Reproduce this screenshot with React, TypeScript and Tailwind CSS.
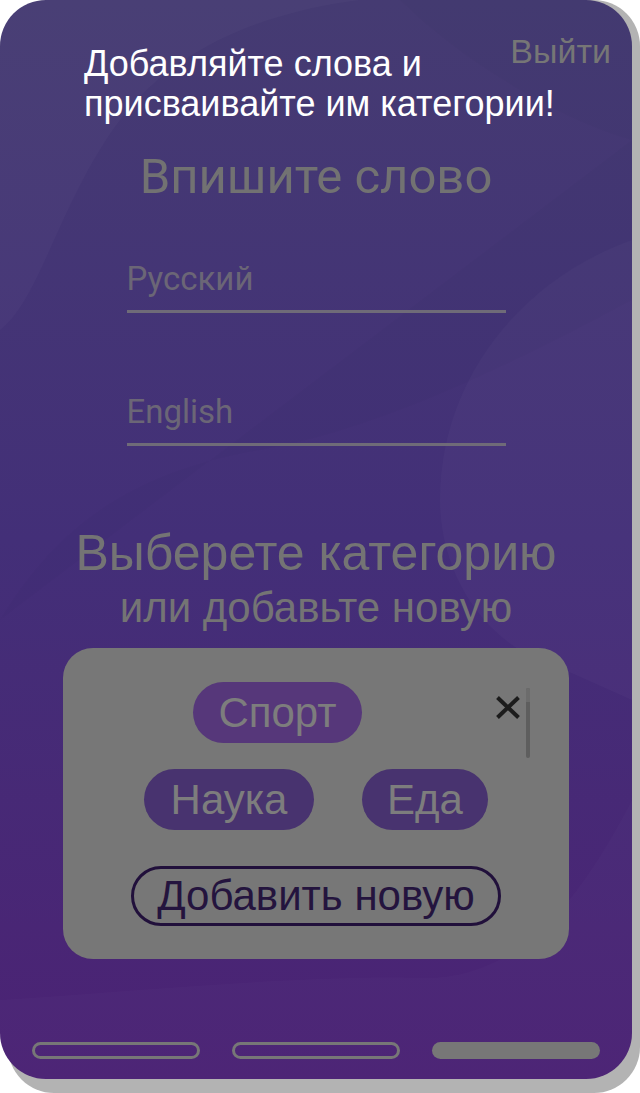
const arial = { fontFamily: '"Liberation Sans", Arial, sans-serif' };
const roboto = { fontFamily: 'Roboto, "Liberation Sans", sans-serif' };

function Chip({ label, className }: { label: string; className: string }) {
  return (
    <div
      className={`flex h-[61px] items-center justify-center rounded-full text-[42px] leading-none text-[#7d7d7d] ${className}`}
      style={arial}
    >
      {label}
    </div>
  );
}

function Field({ placeholder }: { placeholder: string }) {
  return (
    <div className="w-[379px] border-b-[3px] border-[#6f6b78] pb-[11px]">
      <div className="text-[33px] leading-[40px] text-[#6b6676]" style={roboto}>
        {placeholder}
      </div>
    </div>
  );
}

function Backdrop() {
  return (
    <svg className="pointer-events-none absolute inset-0" width="632" height="1079" viewBox="0 0 632 1079">
      <path d="M0 330 C 40 300, 60 200, 120 120 C 180 40, 280 10, 360 0 L 0 0 Z" fill="#ffffff" opacity="0.025" />
      <path d="M632 240 C 520 280, 440 380, 440 500 C 440 560, 470 620, 520 650 L 632 700 Z" fill="#ffffff" opacity="0.025" />
      <path d="M0 620 C 60 520, 140 470, 260 450 C 380 430, 520 360, 632 300 L 632 0 L 400 0 C 460 60, 560 120, 632 140" fill="#000000" opacity="0.015" />
      <path d="M0 1000 C 150 990, 300 975, 420 978 C 520 980, 580 900, 632 800 L 632 1079 L 0 1079 Z" fill="#ffffff" opacity="0.015" />
    </svg>
  );
}

export default function App() {
  return (
    <div className="relative h-[1093px] w-[640px] overflow-hidden bg-white">
      <div className="absolute left-2 top-0 h-[1093px] w-[632px] rounded-[46px] bg-[#b3b3b3]" />
      <div className="relative flex h-[1079px] w-[632px] flex-col overflow-hidden rounded-[46px] bg-gradient-to-b from-[#453b72] via-[#432f78] to-[#4b2274]">
        <Backdrop />

        <div className="relative flex justify-end pr-[21px] pt-[34px]">
          <span className="text-[34px] leading-none text-[#767676]" style={arial}>
            Выйти
          </span>
        </div>

        <h1 className="relative mt-[84px] text-center text-[49px] leading-none text-[#727272]" style={roboto}>
          Впишите слово
        </h1>

        <div className="relative mt-[58px] flex flex-col items-center gap-[79px]">
          <Field placeholder="Русский" />
          <Field placeholder="English" />
        </div>

        <div className="relative mt-[82px] flex flex-col items-center" style={arial}>
          <h2 className="text-[50px] leading-none text-[#747474]">Выберете категорию</h2>
          <h3 className="mt-[9px] text-[42px] leading-none text-[#747474]">или добавьте новую</h3>
        </div>

        <div className="relative ml-[63px] mt-[19px] flex h-[311px] w-[506px] flex-col rounded-[30px] bg-[#777777] pt-[34px]">
          <div className="flex pl-[130px]">
            <Chip label="Спорт" className="w-[169px] bg-[#56377a]" />
          </div>
          <div className="mt-[26px] flex pl-[81px]">
            <Chip label="Наука" className="w-[170px] bg-[#48336f]" />
            <Chip label="Еда" className="ml-[48px] w-[126px] bg-[#48336f]" />
          </div>
          <div className="mt-[36px] flex pl-[68px]">
            <div
              className="flex h-[60px] w-[370px] items-center justify-center rounded-full border-[3px] border-[#21103b] text-[42px] leading-none text-[#24143e]"
              style={arial}
            >
              Добавить новую
            </div>
          </div>

          <svg className="absolute left-[432px] top-[47px]" width="26" height="25" viewBox="0 0 26 25">
            <path d="M2.5 2.5 L23.5 22.5 M23.5 2.5 L2.5 22.5" stroke="#1c1c1c" strokeWidth="4" />
          </svg>
          <div className="absolute left-[463px] top-[40px] flex h-[70px] w-[4px] flex-col overflow-hidden rounded-full bg-[#5e5e5e]">
            <div className="h-[14px] bg-[#6c6c6c]" />
          </div>
        </div>

        <div className="relative mt-auto flex justify-between px-[32px] pb-[20px]">
          <div className="h-[17px] w-[168px] rounded-full border-[3px] border-[#777777]" />
          <div className="h-[17px] w-[168px] rounded-full border-[3px] border-[#777777]" />
          <div className="h-[17px] w-[168px] rounded-full bg-[#777777]" />
        </div>

        <p className="absolute left-[84px] top-[44px] whitespace-nowrap text-[36px] leading-[40px] text-white" style={arial}>
          Добавляйте слова и<br />присваивайте им категории!
        </p>
      </div>
    </div>
  );
}
